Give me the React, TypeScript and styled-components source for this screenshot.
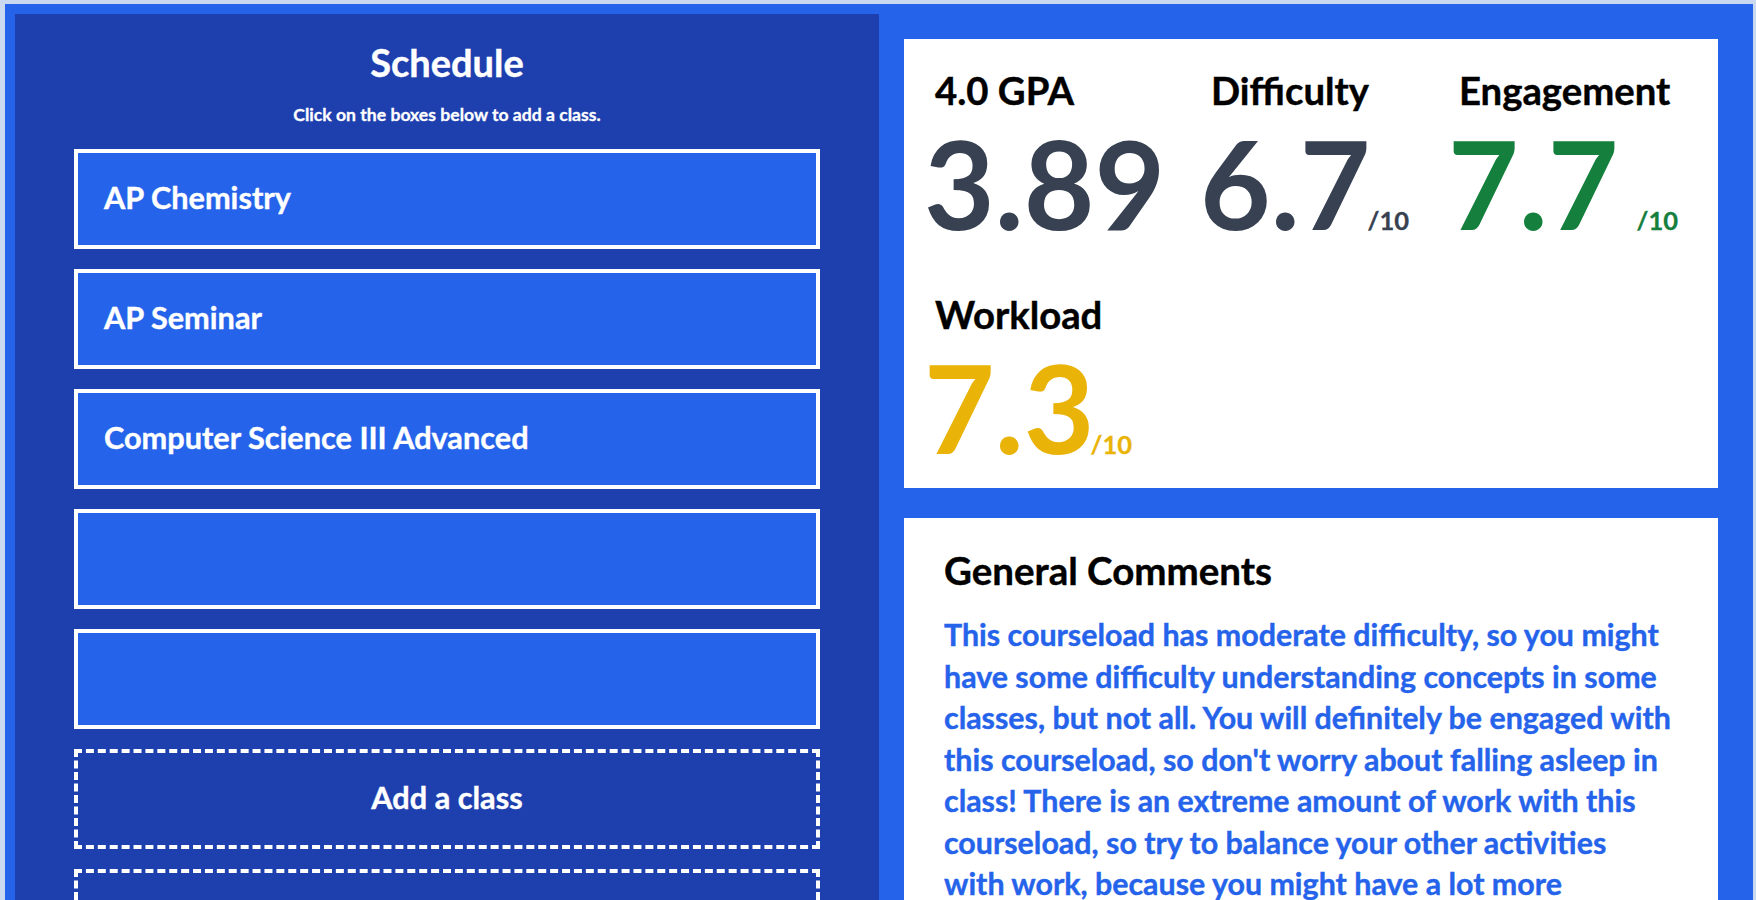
import React from "react";
import styled, { createGlobalStyle } from "styled-components";

const GlobalStyle = createGlobalStyle`
  html, body { margin: 0; padding: 0; }
  body {
    background: #cbd9f0;
    font-family: Lato, "Open Sans", "Liberation Sans", sans-serif;
  }
  * { box-sizing: border-box; }
`;

const Frame = styled.div`
  margin: 4px 3px 0 5px;
  padding: 10px 0 0 10px;
  background: #2563eb;
  display: grid;
  grid-template-columns: 864px 1fr;
  align-items: start;
`;

const SchedulePanel = styled.section`
  background: #1e40af;
  padding: 26px 0 40px;
  display: flex;
  flex-direction: column;
  align-items: center;
  min-height: 1100px;
`;

const Title = styled.h1`
  margin: 0;
  color: #fff;
  font-size: 38px;
  line-height: 1.2;
  font-weight: 700;
  -webkit-text-stroke: 0.4px #fff;
`;

const Subtitle = styled.p`
  margin: 18px 0 0;
  color: #fff;
  font-size: 17.6px;
  line-height: 1.2;
  font-weight: 700;
  -webkit-text-stroke: 0.3px #fff;
`;

const ClassList = styled.div`
  margin-top: 24px;
  width: 746px;
  display: flex;
  flex-direction: column;
  gap: 20px;
`;

const ClassBox = styled.button<{ $empty?: boolean }>`
  height: 100px;
  width: 100%;
  display: flex;
  align-items: center;
  justify-content: ${(p) => (p.$empty ? "center" : "flex-start")};
  padding: 0 26px;
  background: ${(p) => (p.$empty ? "#1e40af" : "#2563eb")};
  border: 4px ${(p) => (p.$empty ? "dashed" : "solid")} #fff;
  color: #fff;
  font-family: inherit;
  font-size: 30.7px;
  font-weight: 700;
  line-height: 1.2;
  cursor: pointer;
  text-align: left;
  -webkit-text-stroke: 0.4px #fff;
`;

const RightColumn = styled.div`
  padding: 25px 35px 0 25px;
  display: flex;
  flex-direction: column;
  gap: 30px;
`;

const Card = styled.section`
  background: #fff;
`;

const StatsCard = styled(Card)`
  padding: 29px 20px 20px 20px;
  display: grid;
  grid-template-columns: 276px 248px 1fr;
  row-gap: 48px;
`;

const Stat = styled.div`
  display: flex;
  flex-direction: column;
`;

const StatLabel = styled.h2`
  margin: 0 0 8px 11px;
  color: #000;
  font-size: 38.3px;
  line-height: 1.2;
  font-weight: 700;
  -webkit-text-stroke: 0.4px #000;
`;

const StatValueRow = styled.div`
  display: flex;
  align-items: baseline;
`;

const StatValue = styled.span<{ $color: string }>`
  color: ${(p) => p.$color};
  font-size: 122px;
  line-height: 1;
  font-weight: 700;
`;

const StatSuffix = styled.span<{ $color: string; $offset: number }>`
  color: ${(p) => p.$color};
  margin-left: ${(p) => p.$offset}px;
  font-size: 25.5px;
  font-weight: 700;
  -webkit-text-stroke: 0.3px ${(p) => p.$color};
`;

const CommentsCard = styled(Card)`
  padding: 29px 40px 40px 40px;
`;

const CommentsTitle = styled.h2`
  margin: 0;
  color: #000;
  font-size: 38.5px;
  line-height: 1.2;
  font-weight: 700;
  -webkit-text-stroke: 0.4px #000;
`;

const CommentsText = styled.p`
  margin: 21px 0 0;
  color: #2563eb;
  font-size: 30.4px;
  line-height: 41.5px;
  font-weight: 700;
  -webkit-text-stroke: 0.4px #2563eb;
`;

type StatData = {
  label: string;
  value: string;
  color: string;
  suffix?: string;
  offset?: number;
};

const stats: StatData[] = [
  { label: "4.0 GPA", value: "3.89", color: "#374151" },
  { label: "Difficulty", value: "6.7", color: "#374151", suffix: "/10", offset: -3 },
  { label: "Engagement", value: "7.7", color: "#15803d", suffix: "/10", offset: 18 },
  { label: "Workload", value: "7.3", color: "#eab308", suffix: "/10", offset: -4 },
];

const classes = ["AP Chemistry", "AP Seminar", "Computer Science III Advanced", "", ""];

export default function App() {
  return (
    <>
      <GlobalStyle />
      <Frame>
        <SchedulePanel>
          <Title>Schedule</Title>
          <Subtitle>Click on the boxes below to add a class.</Subtitle>
          <ClassList>
            {classes.map((c, i) => (
              <ClassBox key={i}>{c}</ClassBox>
            ))}
            <ClassBox $empty>Add a class</ClassBox>
            <ClassBox $empty>Add a class</ClassBox>
          </ClassList>
        </SchedulePanel>
        <RightColumn>
          <StatsCard>
            {stats.map((s) => (
              <Stat key={s.label}>
                <StatLabel>{s.label}</StatLabel>
                <StatValueRow>
                  <StatValue $color={s.color}>{s.value}</StatValue>
                  {s.suffix && (
                    <StatSuffix $color={s.color} $offset={s.offset ?? 0}>
                      {s.suffix}
                    </StatSuffix>
                  )}
                </StatValueRow>
              </Stat>
            ))}
          </StatsCard>
          <CommentsCard>
            <CommentsTitle>General Comments</CommentsTitle>
            <CommentsText>
              This courseload has moderate difficulty, so you might have some
              difficulty understanding concepts in some classes, but not all. You
              will definitely be engaged with this courseload, so don't worry about
              falling asleep in class! There is an extreme amount of work with this
              courseload, so try to balance your other activities with{"\u00a0"}work,
              because you might have a lot more assignments and homework than you
              are used to.
            </CommentsText>
          </CommentsCard>
        </RightColumn>
      </Frame>
    </>
  );
}
